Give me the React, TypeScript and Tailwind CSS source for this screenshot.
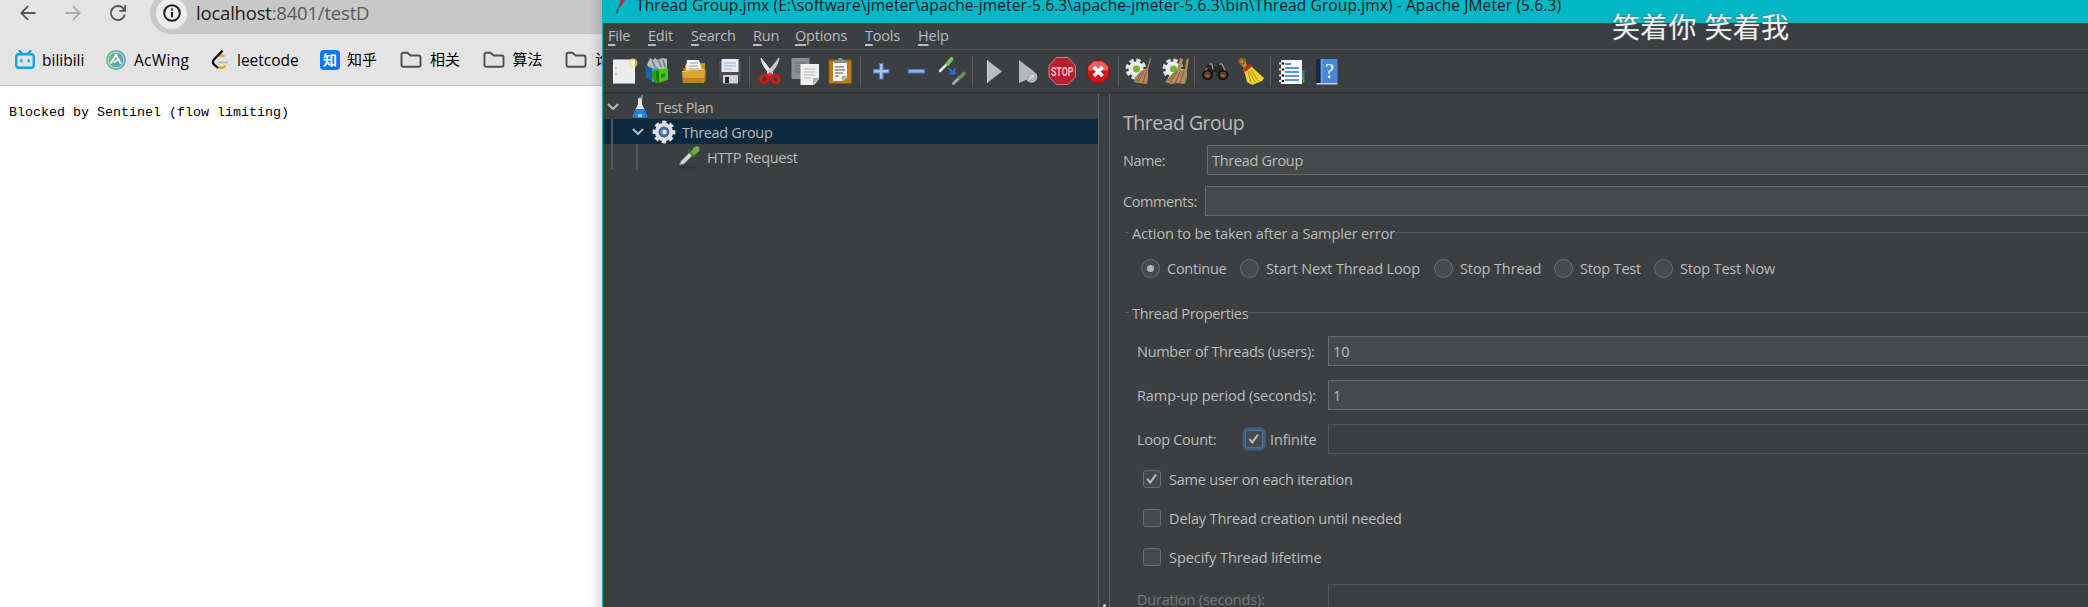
import type { ReactNode } from "react";

/* ---------- toolbar icons ---------- */

function Icon({ className = "", children }: { className?: string; children: ReactNode }) {
  return (
    <svg viewBox="0 0 28 28" className={`h-7 w-7 shrink-0 ${className}`} fill="none">
      {children}
    </svg>
  );
}

const Separator = ({ className = "" }: { className?: string }) => (
  <div className={`h-[31px] w-px shrink-0 bg-[#5a5d5f] ${className}`} />
);

const NewIcon = () => (
  <Icon className="ml-2">
    <rect x="2.500" y="3" width="21" height="23.500" fill="#ececec" stroke="#fafafa" />
    <path d="M2 26.500h22" stroke="#a8a8a0" />
    <path d="M4 11h2M4 17h2" stroke="#999" />
    <circle cx="22" cy="6" r="4.500" fill="#f3e77d" opacity=".7" />
    <circle cx="22" cy="6" r="2" fill="#fffbd0" />
  </Icon>
);

const TemplatesIcon = () => (
  <Icon className="ml-1">
    <path d="M4 8 7 1l3 2 2-2 3 2 4-2 5 1v10L8 13Z" fill="#b9bcbd" />
    <path d="m9 3 3 7M15 2l3 8M20 3l2 7" stroke="#747879" strokeWidth="1.500" />
    <path d="m2 9 7 2v13l-6-3Z" fill="#1565a7" />
    <path d="m9 11 6-1v14l-6 1Z" fill="#3da5e0" />
    <path d="m9 14 7-2 2 12-5 2-4-4Z" fill="#2f9c1b" />
    <path d="m13 13 12-2v12l-10 3-2-3Z" fill="#45c411" />
    <path d="m13 13 3 1v12l-3-3Z" fill="#1f7e10" />
    <path d="m18 17 4-1v4l-4 1Z" fill="#258611" />
  </Icon>
);

const OpenIcon = () => (
  <Icon className="ml-[9px]">
    <path d="M3 11h22l1 3v11H3Z" fill="#9c6a14" />
    <path d="M5 8 7 6h18v8H5Z" fill="#c9912c" />
    <path d="M7 3h12l3 10H6Z" fill="#f2f2f2" />
    <path d="M10 6h8M9 9h9M9 12h10" stroke="#9a9a9a" />
    <path d="M2 14c6 0 8-1 10-2h12l1 1-1 13H3Z" fill="#dda436" />
    <path d="M2 14.500c6 0 8-1 10-2h12" stroke="#f3cf74" />
    <path d="M3 21h21l-.5 5H3.500Z" fill="#bd8219" />
  </Icon>
);

const SaveIcon = () => (
  <Icon className="ml-2">
    <path d="M2 3h24v23H4l-2-2Z" fill="#4a4e54" stroke="#2c2f33" />
    <rect x="5.500" y="2" width="17" height="13" fill="#e5edf5" />
    <path d="M8 6h12M8 9h12M8 12h8" stroke="#9ab3cc" />
    <rect x="7" y="18" width="15" height="8.500" fill="#cfcfcf" />
    <rect x="9" y="20" width="4" height="6" fill="#25282b" />
  </Icon>
);

const CutIcon = () => (
  <Icon className="ml-1.5">
    <path d="M5 1c1 6 4 11 10 17l2-2C13 11 8 5 5 1Z" fill="#e7e7e7" stroke="#e7e7e7" />
    <path d="M23 1c-1 6-4 11-10 17l-2-2C15 11 20 5 23 1Z" fill="#c9cbcc" stroke="#c9cbcc" />
    <ellipse cx="8.500" cy="22" rx="4" ry="3.500" transform="rotate(-30 8.500 22)" stroke="#d3191c" strokeWidth="3" />
    <ellipse cx="19.500" cy="22" rx="4" ry="3.500" transform="rotate(30 19.500 22)" stroke="#d3191c" strokeWidth="3" />
    <circle cx="14" cy="17.500" r="2" fill="#e02b2e" />
  </Icon>
);

const CopyIcon = () => (
  <Icon className="ml-[7px]">
    <rect x="0.500" y="1" width="18" height="21" fill="#8b8d8e" />
    <path d="M4 6h11M4 9h11M4 12h7M4 15h7" stroke="#6a6c6d" />
    <path d="M9.500 7H28v15l-5 6H9.500Z" fill="#efefef" />
    <path d="M13 12h11M13 15h11M13 18h11M13 21h7" stroke="#b3b3b3" />
    <path d="M28 21h-6v7Z" fill="#aaa" />
  </Icon>
);

const PasteIcon = () => (
  <Icon className="ml-[7px]">
    <rect x="3" y="3" width="22.500" height="23.500" rx="1" fill="#b97a20" stroke="#8a5710" />
    <path d="M7 5h14v15l-4 4H7Z" fill="#f4f4f4" />
    <path d="M9 10h9M9 13h10M9 16h8M9 19h4" stroke="#8c8c8c" strokeWidth="1.300" />
    <path d="M21 19h-5v5Z" fill="#a3a3a3" />
    <path d="M8 6V3.500L12 3l1-2h3l1 2 4 .5V6Z" fill="#8b8d86" />
  </Icon>
);

const PlusIcon = () => (
  <Icon className="ml-1.5">
    <path d="M12.500 6.500h3.500v6h6v3.500h-6v6h-3.500v-6h-6v-3.500h6Z" fill="#a9c5e8" stroke="#4a7fc6" strokeWidth="1.200" />
  </Icon>
);

const MinusIcon = () => (
  <Icon className="ml-[7px]">
    <path d="M6.500 12.500h16V16h-16Z" fill="#8fb1dd" stroke="#4a7fc6" strokeWidth="1.200" />
  </Icon>
);

const ToggleIcon = () => (
  <Icon className="ml-2">
    <path d="M2 14 9.500 6.500" stroke="#e6e8e4" strokeWidth="2.500" strokeLinecap="round" />
    <path d="m9.500 7 4-5" stroke="#7bc35a" strokeWidth="3.800" strokeLinecap="round" />
    <path d="m10.500 11.500 5.500 4.500M16.500 11.500v5h-5" stroke="#2f6fe0" strokeWidth="1.800" />
    <path d="m15.500 26.500 6-6" stroke="#a4a8a0" strokeWidth="3" strokeLinecap="round" />
    <path d="m22 20.500 4-4" stroke="#65934f" strokeWidth="3.600" strokeLinecap="round" />
  </Icon>
);

const StartIcon = () => (
  <Icon className="ml-[7px]">
    <path d="M7 3v23l15-11.500Z" fill="#b9bbbc" />
    <path d="M7.500 3v23" stroke="#d5d6d6" />
  </Icon>
);

const StartNoPauseIcon = () => (
  <Icon className="ml-1.5">
    <path d="M5 3v23l7-3 8-8.500Z" fill="#b5b7b8" />
    <circle cx="17.500" cy="20" r="5.800" fill="#b9bbbc" />
    <path d="m14.500 23 6-6" stroke="#dedede" strokeWidth="1.500" />
    <circle cx="17.500" cy="20" r="3.800" stroke="#a3a5a6" />
  </Icon>
);

const StopIcon = () => (
  <Icon className="ml-1.5">
    <path d="M8.500.5h11.500l7.500 8v11.500l-7.500 7.500H8.500L1 20V8.500Z" fill="#b9202f" stroke="#c9808a" />
    <text x="14.200" y="18.800" textAnchor="middle" textLength="22.500" lengthAdjust="spacingAndGlyphs" fontSize="13" fontWeight="600" fontFamily="Roboto, sans-serif" fill="#efc9ce">
      STOP
    </text>
  </Icon>
);

const ShutdownIcon = () => (
  <Icon className="ml-2">
    <path d="M9.500 3.500h9l6.500 6v9.500l-6 6.500H9.500L3.500 19V9.500Z" fill="#d41418" stroke="#9b0e10" />
    <path d="M10 4.500h8.500l5.500 5v4H4.500v-4Z" fill="#e86265" />
    <path d="m10 10 8.500 9M18.500 10 10 19" stroke="#fff" strokeWidth="3.600" />
  </Icon>
);

const Gear = () => (
  <>
    <circle cx="12" cy="12" r="8.500" stroke="#dfe1e1" strokeWidth="4" strokeDasharray="4.200 2.480" />
    <circle cx="12" cy="12" r="7.500" fill="#eceded" />
    <circle cx="12.500" cy="12" r="3.500" fill="#73b92f" />
  </>
);

const ClearIcon = () => (
  <Icon className="ml-[5px]">
    <Gear />
    <path d="M26 1c-1 4-2 7-3 10l-6 3-6 6-1 5 5 1 8 1 1-6v-8l3-11Z" fill="#b08a5c" />
    <path d="m20 14-6 11M22 15l-3 11M17 16l-5 8" stroke="#7f5f39" />
  </Icon>
);

const ClearAllIcon = () => (
  <Icon className="ml-[9px]">
    <Gear />
    <path d="m19 1-3 12-7 6-5 6 6 2 6-1 8 1 2-7V13l2-12-3 2-1 9-4 1 2-11Z" fill="#b08a5c" />
    <path d="m16 14-7 12M19 15l-5 11M23 14l-4 12M13 16l-6 8" stroke="#7f5f39" />
  </Icon>
);

const SearchIcon = () => (
  <Icon className="ml-1.5">
    <path d="M7 6h5l1 3h3l1-3h5l6 12-5 4h-5l-3-7h-2l-3 7H5l-4-4Z" fill="#26282a" />
    <path d="M8 7h3l1 5M18 7h3l4 8M6 11l-3 5" stroke="#97999a" strokeWidth="1.400" />
    <circle cx="6.500" cy="18" r="4.300" fill="#6e3d1c" stroke="#0f1011" strokeWidth="1.800" />
    <circle cx="22" cy="18" r="4.300" fill="#6e3d1c" stroke="#0f1011" strokeWidth="1.800" />
    <path d="M4.500 18.500h3.500M20 18.500h3.500" stroke="#b9713a" strokeWidth="1.500" />
  </Icon>
);

const BroomIcon = () => (
  <Icon className="ml-[7px]">
    <path d="m2 4 3-3 4 1 2 7-3 2Z" fill="#c88a35" />
    <circle cx="6" cy="4.500" r="2.500" stroke="#8f5a17" strokeWidth="1.400" />
    <path d="m7 12 7-4 4 4 10 9-2 3-5 2-5 2-5-3-2-8Z" fill="#ecd12a" />
    <path d="m12 15 3 10M15 13l7 11M13 14l6 11" stroke="#b69712" />
    <path d="m7 12 6-5 2.500 3-6.500 5Z" fill="#cf2320" />
  </Icon>
);

const FunctionIcon = () => (
  <Icon className="ml-1.5">
    <rect x="22" y="13" width="5.500" height="6" fill="#2f6fd6" />
    <rect x="22" y="19" width="5.500" height="6.500" fill="#35a02a" />
    <rect x="4" y="3" width="21" height="24" fill="#fafafa" />
    <path d="M8 7h6M8 11h14M8 15h14M8 19h14M8 23h14" stroke="#2b6fd4" strokeWidth="1.300" />
    <path d="M2 6.500h5M2 12.500h5M2 18.500h5M2 24h5" stroke="#dadada" strokeWidth="2.200" />
    <circle cx="6" cy="6.500" r="1.200" fill="#111" />
    <circle cx="6" cy="12.500" r="1.200" fill="#111" />
    <circle cx="6" cy="18.500" r="1.200" fill="#111" />
    <circle cx="6" cy="24" r="1.200" fill="#111" />
  </Icon>
);

const HelpIcon = () => (
  <Icon className="ml-[7px]">
    <path d="M4 3.500 6 2h5v24H4Z" fill="#1b2740" />
    <path d="M8.500 2h17v24h-17Z" fill="#4a87d8" />
    <path d="M4 26h21.500v1.500H5Z" fill="#c8d3e0" />
    <path d="M10 2v24" stroke="#86b1ea" />
    <text x="17.500" y="20.500" textAnchor="middle" fontSize="20" fontFamily="Liberation Serif, serif" fill="#fff">
      ?
    </text>
  </Icon>
);

/* ---------- JMeter widgets ---------- */

const Check = () => (
  <svg viewBox="0 0 18 18" className="h-full w-full" fill="none">
    <path d="m3.800 8.800 3.200 4.200 6.500-9" stroke="#b8babb" strokeWidth="2.300" />
  </svg>
);

function Checkbox({ checked = false, focused = false }: { checked?: boolean; focused?: boolean }) {
  return (
    <span
      className={`h-[18px] w-[18px] shrink-0 rounded-[3px] border bg-[#45494a] ${
        focused ? "border-[#4b76a3] ring-[2.500px] ring-[#3d6185]" : "border-[#6b6e70]"
      }`}
    >
      {checked && <Check />}
    </span>
  );
}

function Radio({ label, className = "", selected = false }: { label: string; className?: string; selected?: boolean }) {
  return (
    <label className={`flex items-center ${className}`}>
      <span className="flex h-[19px] w-[19px] shrink-0 items-center justify-center rounded-full border border-[#6b6e70] bg-[#45494a]">
        {selected && <span className="h-[7px] w-[7px] rounded-full bg-[#b4b6b7]" />}
      </span>
      <span className="ml-[7px] whitespace-nowrap">{label}</span>
    </label>
  );
}

function Field({ children, disabled = false }: { children?: ReactNode; disabled?: boolean }) {
  return (
    <div
      className={`flex h-[30px] flex-1 items-center border border-r-0 pt-px pl-[4px] ${
        disabled ? "border-[#55585a] bg-[#3c3f41]" : "border-[#696c6d] bg-[#45494a]"
      }`}
    >
      {children}
    </div>
  );
}

function Legend({ children, className }: { children: string; className: string }) {
  return (
    <div className={`flex h-[21px] items-center pl-[15px] ${className}`}>
      <span className="h-px w-1 bg-[#5f6264]" />
      <span className="ml-[3px] translate-y-px whitespace-nowrap">{children}</span>
      <span className="h-px flex-1 bg-[#5a5d5f]" />
    </div>
  );
}

const Chevron = ({ className }: { className: string }) => (
  <svg viewBox="0 0 12 8" className={`h-2 w-3 shrink-0 ${className}`} fill="none">
    <path d="m1 1 5 5 5-5" stroke="#b3b5b6" strokeWidth="2.200" />
  </svg>
);

const Pipette = ({ className }: { className: string }) => (
  <svg viewBox="0 0 24 24" className={`h-6 w-6 shrink-0 ${className}`} fill="none">
    <path d="M2 22.500h18" stroke="#2c2e30" strokeWidth="1.500" />
    <path d="m2 20 2-4 9-9 3 3-9 9Z" fill="#d3d6d3" stroke="#6d716d" />
    <path d="m11.500 5.500 6 6" stroke="#35702a" strokeWidth="2.500" />
    <path d="m13.500 7 4-5 4-1 1 3-1 3-4.500 3.500Z" fill="#69b04c" />
  </svg>
);

const TestPlanIcon = () => (
  <svg viewBox="0 0 20 24" className="ml-[11px] h-6 w-5 shrink-0" fill="none">
    <path d="M2 23h16" stroke="#26282a" strokeWidth="1.500" />
    <path d="M8 3h4v6l5 12q0 2-2 2H5q-2 0-2-2l5-12Z" fill="#dfe3e6" />
    <path d="M5.500 14h9l3 7q0 2-2 2H4.500q-2 0-2-2Z" fill="#2a7ddf" />
    <path d="M8 19h4v3H8Z" fill="#9fd0fa" />
    <path d="M9 3h3V0" stroke="#8d9193" strokeWidth="1.500" />
  </svg>
);

const ThreadGroupIcon = () => (
  <svg viewBox="0 0 24 24" className="ml-[8px] h-6 w-6 shrink-0" fill="none">
    <circle cx="12" cy="12" r="9.600" stroke="#e2e3e4" strokeWidth="3.600" strokeDasharray="4.300 3.240" strokeDashoffset="2.150" />
    <circle cx="12" cy="12" r="7.200" fill="#5d83b8" stroke="#dddee0" strokeWidth="4" />
    <circle cx="12" cy="12" r="4.500" stroke="#41659c" strokeWidth="1.800" />
    <circle cx="12.500" cy="12" r="2.200" fill="#dbe8f8" />
  </svg>
);

const menus = [
  { name: "File", width: "w-10" },
  { name: "Edit", width: "w-[43px]" },
  { name: "Search", width: "w-[62px]" },
  { name: "Run", width: "w-[42px]" },
  { name: "Options", width: "w-[70px]" },
  { name: "Tools", width: "w-[53px]" },
  { name: "Help", width: "w-[50px]" },
];

/* ---------- browser ---------- */

const FolderIcon = () => (
  <svg viewBox="0 0 22 18" className="h-[18px] w-[22px] shrink-0" fill="none">
    <path d="M1.500 14V3.500q0-1.800 1.800-1.800h4.200l3 2.800h8.200q1.800 0 1.800 1.800V14q0 1.800-1.800 1.800H3.300Q1.500 15.800 1.500 14Z" stroke="#4f4f4f" strokeWidth="1.900" />
  </svg>
);

function Browser() {
  return (
    <section className="relative flex w-[602px] shrink-0 flex-col overflow-hidden bg-white text-black">
      <header className="h-[86px] border-b border-[#c3c3c3] bg-[#e4e4e4]">
        <div className="flex h-[34px] items-start pl-[20px]">
          <svg viewBox="0 0 16 16" className="mt-[5px] h-4 w-4" fill="none">
            <path d="M15.500 8H1.500M8 1.200 1.300 8 8 14.800" stroke="#555" strokeWidth="1.800" />
          </svg>
          <svg viewBox="0 0 16 16" className="ml-[29px] mt-[5px] h-4 w-4" fill="none">
            <path d="M.5 8h14M8 1.200 14.700 8 8 14.800" stroke="#adadad" strokeWidth="1.800" />
          </svg>
          <svg viewBox="0 0 18 18" className="ml-[28px] mt-[4px] h-[18px] w-[18px]" fill="none">
            <path d="M15.800 10.500A7 7 0 1 1 14.500 4.800L16 6.500" stroke="#555" strokeWidth="1.900" />
            <path d="M16.200 1v5.900h-5.900" stroke="#555" strokeWidth="1.900" />
          </svg>
          <div className="-mt-2 ml-[23px] flex h-[42px] flex-1 items-center rounded-l-full bg-[#c8c8c8] pl-[6px]">
            <span className="flex h-[31px] w-[31px] items-center justify-center rounded-full bg-[#ececec]">
              <svg viewBox="0 0 18 18" className="h-[18px] w-[18px]" fill="none">
                <circle cx="9" cy="9" r="7.800" stroke="#1f1f1f" strokeWidth="2" />
                <path d="M9 8v5.200M9 4.600v2" stroke="#1f1f1f" strokeWidth="2" />
              </svg>
            </span>
            <span className="ml-[9px] text-[18.500px] tracking-[-0.200px] text-[#5a5a5a]">
              <span className="text-[#1c1c1c]">localhost</span>:8401/testD
            </span>
          </div>
        </div>

        <nav className="flex h-[51px] items-center pl-[15px] text-[15.500px] whitespace-nowrap">
          <div className="flex w-[91px] shrink-0 items-center">
            <svg viewBox="0 0 20 20" className="mr-[7px] h-5 w-5" fill="none">
              <path d="m4.500 1 3 3M15.500 1l-3 3" stroke="#12a5e0" strokeWidth="2.200" strokeLinecap="round" />
              <rect x="1.200" y="4.200" width="17.600" height="13.600" rx="2.800" stroke="#12a5e0" strokeWidth="2.400" />
              <path d="M6.300 9.200v3M13.700 9.200v3" stroke="#12a5e0" strokeWidth="2.200" />
            </svg>
            <span className="translate-y-px">bilibili</span>
          </div>
          <div className="flex w-[105px] shrink-0 items-center">
            <svg viewBox="0 0 20 20" className="mr-[8px] h-5 w-5" fill="none">
              <defs>
                <linearGradient id="acwing" x1="0" y1="0" x2="1" y2=".3">
                  <stop stopColor="#63c568" />
                  <stop offset="1" stopColor="#5d9fc4" />
                </linearGradient>
              </defs>
              <circle cx="10" cy="10" r="10" fill="url(#acwing)" />
              <circle cx="10" cy="10" r="7.900" stroke="#d6eee2" strokeWidth=".9" />
              <path d="m4.500 13.500 5.500-8.500 5 9M7.500 12.500l4-2.500" stroke="#fff" strokeWidth="1.700" />
            </svg>
            <span className="translate-y-px tracking-[0.300px]">AcWing</span>
          </div>
          <div className="flex w-[109px] shrink-0 items-center">
            <svg viewBox="0 0 20 20" className="mr-[6px] h-5 w-5" fill="none">
              <path d="M7 12.500h10" stroke="#b3b3b3" strokeWidth="1.800" />
              <path d="M8.500 6.500q2.500-2.300 5 .3M14.500 15.500q-3 4-7 1.500" stroke="#f7a11b" strokeWidth="2.300" />
              <path d="M11.500.8 3 9.500q-2.200 2.500 0 5l4 3.500" stroke="#0b0b0b" strokeWidth="2.300" />
            </svg>
            <span className="translate-y-px">leetcode</span>
          </div>
          <div className="flex w-[80px] shrink-0 items-center">
            <span className="mr-[7px] flex h-5 w-5 items-center justify-center rounded-[4px] bg-[#0b77fb] text-[14px] font-bold text-white">知</span>
            <span className="text-[15px]">知乎</span>
          </div>
          {["相关", "算法", "论文"].map((name) => (
            <div key={name} className="flex w-[82.500px] shrink-0 items-center gap-[8px]">
              <FolderIcon />
              <span className="shrink-0 text-[15px]">{name}</span>
            </div>
          ))}
        </nav>
      </header>
      <pre className="pt-[18px] pl-[9px] font-['Liberation_Mono',monospace] text-[13.330px] leading-[18px]">
        Blocked by Sentinel (flow limiting)
      </pre>
      <div className="absolute inset-y-0 right-0 w-3 bg-linear-to-r from-transparent to-black/12" />
    </section>
  );
}

/* ---------- JMeter window ---------- */

function TestTree() {
  return (
    <aside className="w-[496px] shrink-0 border-r border-[#5f6264]">
      <div className="flex h-[25px] items-center pl-1">
        <Chevron />
        <TestPlanIcon />
        <span className="ml-[6px] translate-y-px tracking-[-0.450px]">Test Plan</span>
      </div>
      <div className="flex h-[25px] items-center bg-[#0d293e] pl-2">
        <span className="h-full w-0.5 bg-[#55585a]" />
        <Chevron className="ml-[19px]" />
        <ThreadGroupIcon />
        <span className="ml-[6px] translate-y-px tracking-[-0.350px]">Thread Group</span>
      </div>
      <div className="flex h-[25px] items-center pl-2">
        <span className="h-full w-0.5 bg-[#55585a]" />
        <span className="ml-[23px] h-full w-0.5 bg-[#55585a]" />
        <Pipette className="ml-[39px]" />
        <span className="ml-[6px] translate-y-px tracking-[-0.300px]">HTTP Request</span>
      </div>
    </aside>
  );
}

function ThreadGroupPanel() {
  return (
    <main className="flex-1 border-l border-[#5f6264] leading-5">
      <h1 className="flex h-[51px] items-center pl-[13px] pt-[6px] text-[19.400px] tracking-[-0.450px]">Thread Group</h1>
      <div className="flex items-center pl-[13px]">
        <span className="w-[84px] translate-y-px tracking-[-0.450px]">Name:</span>
        <Field>
          <span className="tracking-[-0.300px]">Thread Group</span>
        </Field>
      </div>
      <div className="mt-[11px] flex items-center pl-[13px]">
        <span className="w-[82px] translate-y-px tracking-[-0.400px]">Comments:</span>
        <Field />
      </div>

      <Legend className="mt-[6px] tracking-[-0.140px]">Action to be taken after a Sampler error</Legend>
      <div className="mt-[15px] flex h-[21px] items-center pl-[31px]">
        <Radio selected label="Continue" className="w-[99px] tracking-[-0.250px]" />
        <Radio label="Start Next Thread Loop" className="w-[194px] tracking-[-0.150px]" />
        <Radio label="Stop Thread" className="w-[120px] tracking-[-0.100px]" />
        <Radio label="Stop Test" className="w-[100px] tracking-[-0.180px]" />
        <Radio label="Stop Test Now" className="tracking-[-0.180px]" />
      </div>

      <Legend className="mt-[23px] tracking-[-0.330px]">Thread Properties</Legend>
      <div className="mt-[13px] flex items-center pl-[27px]">
        <span className="w-[191px] translate-y-px tracking-[-0.290px]">Number of Threads (users):</span>
        <Field>10</Field>
      </div>
      <div className="mt-[14px] flex items-center pl-[27px]">
        <span className="w-[191px] translate-y-px tracking-[-0.090px]">Ramp-up period (seconds):</span>
        <Field>1</Field>
      </div>
      <div className="mt-[14px] flex items-center pl-[27px]">
        <span className="w-[108px] translate-y-px tracking-[-0.280px]">Loop Count:</span>
        <label className="flex w-[83px] items-center">
          <Checkbox checked focused />
          <span className="ml-[7px] translate-y-px tracking-[-0.100px]">Infinite</span>
        </label>
        <Field disabled />
      </div>
      <div className="mt-[5px] pl-[33px]">
        <label className="flex h-[39px] items-center gap-[8px] tracking-[-0.220px]">
          <Checkbox checked />
          <span className="translate-y-px">Same user on each iteration</span>
        </label>
        <label className="flex h-[39px] items-center gap-[8px] tracking-[-0.140px]">
          <Checkbox />
          <span className="translate-y-px">Delay Thread creation until needed</span>
        </label>
        <label className="flex h-[39px] items-center gap-[8px] tracking-[-0.060px]">
          <Checkbox />
          <span className="translate-y-px">Specify Thread lifetime</span>
        </label>
      </div>
      <div className="mt-2 flex items-center pl-[27px] text-[#777a7b]">
        <span className="w-[191px] translate-y-px tracking-[-0.200px]">Duration (seconds):</span>
        <Field disabled />
      </div>
    </main>
  );
}

function JMeter() {
  return (
    <section className="relative flex min-w-0 flex-1 flex-col border-l border-[#06aebb] bg-[#3c3f41] text-[14.500px] text-[#bbbbbb]">
      <div className="flex h-[23px] shrink-0 items-start overflow-hidden bg-[#04b7c5] text-[#07191b]">
        <svg viewBox="0 0 12 14" className="ml-[12px] h-[14px] w-3 shrink-0" fill="none">
          <path d="M1.500 13 3 9" stroke="#5a2a55" strokeWidth="1.500" strokeDasharray="1.500 1" />
          <path d="M2.500 9 6-1h5L6 6Z" fill="#c4254c" />
        </svg>
        <span className="-mt-[6px] ml-[9px] text-[15.500px] leading-[22px] tracking-[0.110px] whitespace-nowrap">
          {"Thread Group.jmx (E:\\software\\jmeter\\apache-jmeter-5.6.3\\apache-jmeter-5.6.3\\bin\\Thread Group.jmx) - Apache JMeter (5.6.3)"}
        </span>
      </div>
      <div className="flex h-[27px] shrink-0 items-center border-b border-[#55585a] pl-[5px] tracking-[-0.200px]">
        {menus.map((menu) => (
          <span key={menu.name} className={menu.width}>
            <span className="underline decoration-2 underline-offset-[3px]">{menu.name[0]}</span>
            {menu.name.slice(1)}
          </span>
        ))}
      </div>
      <div className="flex h-11 shrink-0 items-center border-b-2 border-[#313436]">
        <NewIcon />
        <TemplatesIcon />
        <OpenIcon />
        <SaveIcon />
        <Separator className="ml-[5px]" />
        <CutIcon />
        <CopyIcon />
        <PasteIcon />
        <Separator className="ml-1.5" />
        <PlusIcon />
        <MinusIcon />
        <ToggleIcon />
        <Separator className="ml-1.5" />
        <StartIcon />
        <StartNoPauseIcon />
        <StopIcon />
        <ShutdownIcon />
        <Separator className="ml-1.5" />
        <ClearIcon />
        <ClearAllIcon />
        <Separator className="ml-[5px]" />
        <SearchIcon />
        <BroomIcon />
        <Separator className="ml-1.5" />
        <FunctionIcon />
        <HelpIcon />
      </div>
      <div className="flex min-h-0 flex-1">
        <TestTree />
        <div className="flex w-[10px] shrink-0 items-end justify-center">
          <span className="h-[3px] w-[3px] rounded-full bg-[#d0d0d0]" />
        </div>
        <ThreadGroupPanel />
      </div>
      <div className="absolute top-[6px] left-[1009px] text-[28px] leading-[42px] tracking-[0.300px] whitespace-pre text-[#f0f0f0] [text-shadow:0_0_2px_#5a5a5a]">
        笑着你 笑着我
      </div>
    </section>
  );
}

export default function App() {
  return (
    <div className="flex h-[607px] w-[2088px] overflow-hidden font-['Open_Sans','Noto_Sans_CJK_SC',sans-serif]">
      <Browser />
      <JMeter />
    </div>
  );
}
